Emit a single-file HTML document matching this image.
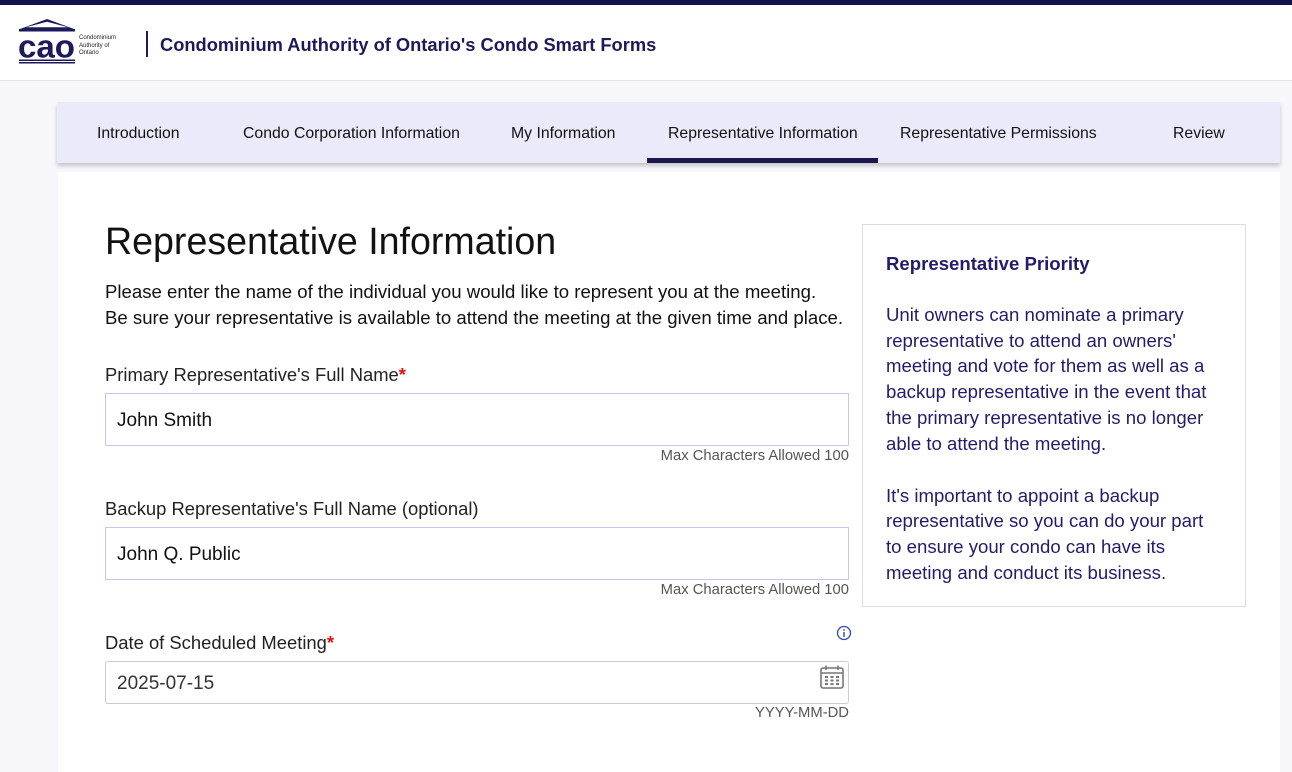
<!DOCTYPE html>
<html><head><style>
*{margin:0;padding:0;box-sizing:border-box}
body{width:1292px;height:752px;overflow:hidden;background:#f7f7fb;font-family:"Liberation Sans",sans-serif;color:#1a1a1a;position:relative}
.top{position:absolute;left:0;top:0;width:1292px;height:5px;background:#14124a}
.hdr{position:absolute;left:0;top:5px;width:1292px;height:76px;background:#fff;border-bottom:1px solid #e4e4ea}
.title{position:absolute;left:160px;top:29px;font-size:18.3px;font-weight:bold;color:#1d1a5a}
.vbar{position:absolute;left:146px;top:26px;width:2px;height:26px;background:#1d1a5a}
.tabs{position:absolute;left:57px;top:102px;width:1223px;height:61px;background:#ebeafb;box-shadow:0 3px 4px rgba(0,0,0,.2)}
.tab{position:absolute;top:23px;font-size:15.8px;color:#111}
.ul{position:absolute;left:590px;top:56px;width:231px;height:5px;background:#1a1650}
.card{position:absolute;left:58px;top:172px;width:1222px;height:600px;background:#fff}
h1{position:absolute;left:105px;top:220px;font-size:37.6px;font-weight:normal;color:#111}
.p{position:absolute;left:105px;font-size:18.6px;color:#111}
.lbl{position:absolute;left:105px;font-size:18.4px;color:#222}
.req{color:#e01010;font-weight:bold}
.inp{position:absolute;left:105px;width:744px;background:#fff;border:1px solid #c8c6ef;font-size:19px;padding-left:11px;color:#111}
.max{position:absolute;right:443px;font-size:14.8px;color:#555}
.side{position:absolute;left:862px;top:224px;width:384px;height:383px;border:1px solid #ddd;background:#fff;padding:26px 23px;color:#221c6b;font-size:18.6px;line-height:25.8px}
</style></head><body>
<div class="top"></div>
<div class="hdr">
<svg style="position:absolute;left:18px;top:14px" width="58" height="45" viewBox="0 0 58 45">
<path d="M2 10 L29 0 L56 10 Z M8 8.3 L29 2.8 L50 8.3 Z" fill="#1d1a5a" fill-rule="evenodd"/>
<rect x="1" y="10" width="56" height="2.5" fill="#1d1a5a"/>
<text x="0" y="38.5" font-family="Liberation Sans" font-size="32" font-weight="bold" fill="#1d1a5a" textLength="57" lengthAdjust="spacingAndGlyphs">cao</text>
<rect x="1" y="40.5" width="56" height="1.5" fill="#1d1a5a"/>
<rect x="1" y="43" width="56" height="1.5" fill="#1d1a5a"/>
</svg>
<div style="position:absolute;left:79px;top:30px;font-size:6px;line-height:7.5px;color:#222">Condominium<br>Authority of<br>Ontario</div>
<div class="vbar"></div>
<div class="title">Condominium Authority of Ontario's Condo Smart Forms</div>
</div>
<div class="tabs">
<div class="tab" style="left:40px">Introduction</div>
<div class="tab" style="left:186px">Condo Corporation Information</div>
<div class="tab" style="left:454px">My Information</div>
<div class="tab" style="left:611px">Representative Information</div>
<div class="tab" style="left:843px">Representative Permissions</div>
<div class="tab" style="left:1116px">Review</div>
<div class="ul"></div>
</div>
<div class="card"></div>
<h1>Representative Information</h1>
<div class="p" style="top:281px">Please enter the name of the individual you would like to represent you at the meeting.</div>
<div class="p" style="top:307px">Be sure your representative is available to attend the meeting at the given time and place.</div>
<div class="lbl" style="top:364px">Primary Representative's Full Name<span class="req">*</span></div>
<div class="inp" style="top:393px;height:53px;line-height:53px">John Smith</div>
<div class="max" style="top:448px">Max Characters Allowed 100</div>
<div class="lbl" style="top:498px">Backup Representative's Full Name (optional)</div>
<div class="inp" style="top:527px;height:53px;line-height:53px">John Q. Public</div>
<div class="max" style="top:582px">Max Characters Allowed 100</div>
<div class="lbl" style="top:632px">Date of Scheduled Meeting<span class="req">*</span></div>
<svg style="position:absolute;left:836px;top:625px" width="16" height="16" viewBox="0 0 16 16"><circle cx="8" cy="8" r="6.5" fill="none" stroke="#2a4aa8" stroke-width="1.3"/><rect x="7.3" y="7" width="1.4" height="5" fill="#2a4aa8"/><circle cx="8" cy="5" r="0.9" fill="#2a4aa8"/></svg>
<div class="inp" style="top:661px;height:43px;line-height:43px;border-color:#ccc;border-radius:3px;color:#333">2025-07-15</div>
<svg style="position:absolute;left:819px;top:664px" width="26" height="26" viewBox="0 0 26 26" fill="none" stroke="#777" stroke-width="1.6"><rect x="2" y="4" width="22" height="20" rx="2"/><line x1="2" y1="9" x2="24" y2="9"/><line x1="7" y1="1.5" x2="7" y2="6"/><line x1="19" y1="1.5" x2="19" y2="6"/><g fill="#777" stroke="none"><rect x="6" y="12" width="3" height="2"/><rect x="11.5" y="12" width="3" height="2"/><rect x="17" y="12" width="3" height="2"/><rect x="6" y="15.5" width="3" height="2"/><rect x="11.5" y="15.5" width="3" height="2"/><rect x="17" y="15.5" width="3" height="2"/><rect x="6" y="19" width="3" height="2"/><rect x="11.5" y="19" width="3" height="2"/><rect x="17" y="19" width="3" height="2"/></g></svg>
<div class="max" style="top:705px">YYYY-MM-DD</div>
<div class="side">
<div style="font-weight:bold;margin-bottom:25px">Representative Priority</div>
<div>Unit owners can nominate a primary representative to attend an owners' meeting and vote for them as well as a backup representative in the event that the primary representative is no longer able to attend the meeting.</div>
<div style="margin-top:26px">It's important to appoint a backup representative so you can do your part to ensure your condo can have its meeting and conduct its business.</div>
</div>
</body></html>
